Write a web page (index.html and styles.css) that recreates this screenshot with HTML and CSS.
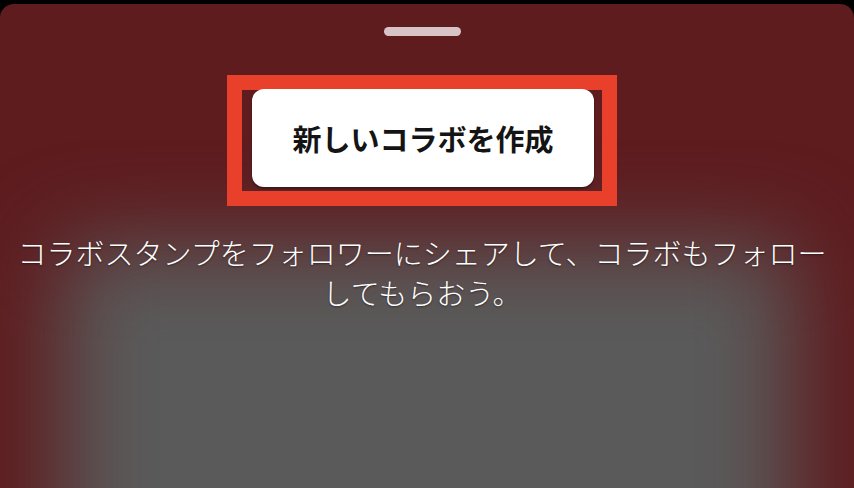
FILE: index.html
```html
<!DOCTYPE html>
<html lang="ja">
<head>
<meta charset="utf-8">
<title>新しいコラボを作成</title>
<link rel="stylesheet" href="styles.css">
</head>
<body>
<div class="sheet">
  <div class="glow" aria-hidden="true"></div>
  <div class="handle"></div>
  <div class="highlight">
    <button class="create-btn">新しいコラボを作成</button>
  </div>
  <p class="desc">コラボスタンプをフォロワーにシェアして、コラボもフォローしてもらおう。</p>
</div>
</body>
</html>
```
FILE: styles.css
```css
html, body {
  margin: 0;
  padding: 0;
  background: #000;
  width: 854px;
  height: 488px;
  overflow: hidden;
}

.sheet {
  position: relative;
  margin-top: 4px;
  height: 484px;
  border-radius: 14px 14px 0 0;
  background: #5e1c1f;
  overflow: hidden;
  display: flex;
  flex-direction: column;
  align-items: center;
  padding: 0 14px 0 4px;
  box-sizing: border-box;
  font-family: "Noto Sans CJK JP", "Noto Sans", sans-serif;
}

.glow {
  position: absolute;
  left: 62px;
  right: 62px;
  top: 240px;
  bottom: -120px;
  background: #5a5a5a;
  filter: blur(44px);
  z-index: 0;
}

.handle {
  position: relative;
  z-index: 1;
  width: 77px;
  height: 9px;
  border-radius: 5px;
  background: #d8c4c7;
  margin-top: 23px;
  flex: none;
}

.highlight {
  position: relative;
  z-index: 1;
  margin-top: 39px;
  width: 342px;
  height: 97px;
  border: 15px solid #e8402a;
  padding: 0 8px 4px 10px;
  box-sizing: content-box;
  display: flex;
  flex: none;
}

.create-btn {
  margin-top: -1px;
  width: 342px;
  height: 98px;
  border: none;
  border-radius: 12px;
  background: #fff;
  box-shadow: 0 2px 2px rgba(0, 0, 0, 0.35);
  color: #141414;
  font-family: "Noto Sans CJK JP", "Noto Sans", sans-serif;
  font-size: 29px;
  font-weight: 600;
  padding: 0;
  display: flex;
  align-items: center;
  justify-content: center;
  flex: none;
}

.desc {
  position: relative;
  z-index: 1;
  margin: 26px 0 0;
  color: #fff;
  font-size: 29px;
  font-weight: 300;
  line-height: 40px;
  text-align: center;
  text-shadow: 0 1px 2px rgba(0, 0, 0, 0.45);
}
```
